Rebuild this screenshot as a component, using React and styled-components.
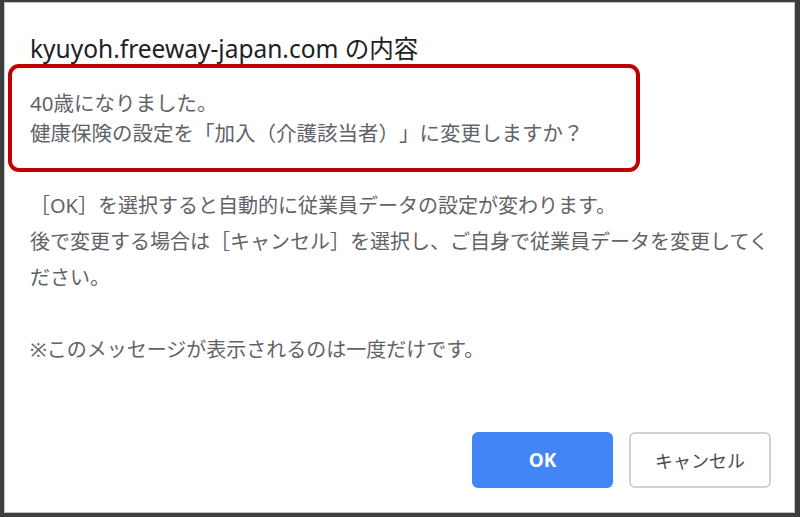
import React from "react"
import styled, { createGlobalStyle } from "styled-components"

const GlobalStyle = createGlobalStyle`
  html, body {
    margin: 0;
    padding: 0;
    background: #ffffff;
  }
  body {
    font-family: "Segoe UI", "Noto Sans", "Noto Sans CJK JP", sans-serif;
    text-spacing-trim: space-all;
  }
`

const Frame = styled.div`
  box-sizing: border-box;
  width: 800px;
  height: 517px;
  background: #ffffff;
  border-style: solid;
  border-color: #3d3d3d;
  border-width: 2px 5px 4px 4px;
  box-shadow: inset 1px 1px 0 #c4c4c4, inset -1px -1px 0 #c4c4c4;
  display: flex;
  flex-direction: column;
  padding: 0 24px 0 26px;
`

const Title = styled.div`
  margin-top: 32px;
  height: 30px;
  line-height: 30px;
  font-size: 24.5px;
  color: #202124;
  white-space: nowrap;
`

const Highlight = styled.div`
  box-sizing: border-box;
  width: 632px;
  margin-left: -22px;
  padding: 20px 18px;
  border: 4px solid #c00000;
  border-radius: 11px;
`

// Chrome alert body text, grey
const Paragraph = styled.div`
  font-size: ${p => p.$size || 20}px;
  line-height: ${p => p.$lh}px;
  color: #5f6368;
  white-space: nowrap;
  margin-top: ${p => p.$top || 0}px;
`

const Footer = styled.div`
  display: flex;
  justify-content: flex-end;
  gap: 16px;
  margin-top: 64px;
`

const Button = styled.button`
  box-sizing: border-box;
  width: ${p => p.$w}px;
  height: 56px;
  border-radius: 6px;
  font-family: inherit;
  font-size: ${p => (p.$primary ? 19 : 18)}px;
  cursor: pointer;
  background: ${p => (p.$primary ? "#4285f4" : "#ffffff")};
  color: ${p => (p.$primary ? "#ffffff" : "#4a4d51")};
  font-weight: ${p => (p.$primary ? 700 : 400)};
  border: ${p => (p.$primary ? "none" : "2px solid #cfd1d4")};
`

const App = () => {
  return (
    <>
      <GlobalStyle />
      <Frame>
        <Title>kyuyoh.freeway-japan.com の内容</Title>

        <Highlight>
          <Paragraph $lh={30} $size={20.5}>
            40歳になりました。
            <br />
            健康保険の設定を「加入（介護該当者）」に変更しますか？
          </Paragraph>
        </Highlight>

        <Paragraph $lh={36} $top={16} $size={20}>
          ［OK］を選択すると自動的に従業員データの設定が変わります。
          <br />
          後で変更する場合は［キャンセル］を選択し、ご自身で従業員データを変更してく
          <br />
          ださい。
          <br />
          <br />
          ※このメッセージが表示されるのは一度だけです。
        </Paragraph>

        <Footer>
          <Button $primary $w={141}>OK</Button>
          <Button $w={142}>キャンセル</Button>
        </Footer>
      </Frame>
    </>
  )
}

export default App
